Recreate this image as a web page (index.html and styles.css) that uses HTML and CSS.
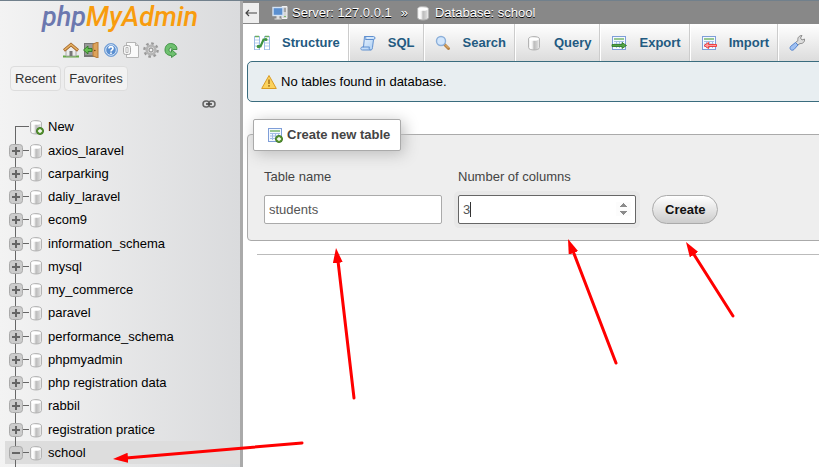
FILE: index.html
```html
<!DOCTYPE html>
<html lang="en">
<head>
<meta charset="utf-8">
<title>phpMyAdmin</title>
<link rel="stylesheet" href="styles.css">
</head>
<body>
<svg class="defs" aria-hidden="true">
  <defs>
    <linearGradient id="metal"><stop offset="0" stop-color="#e4e4e4"/><stop offset=".2" stop-color="#fff"/><stop offset=".35" stop-color="#eee"/><stop offset=".5" stop-color="#bbb"/><stop offset=".8" stop-color="#d4d4d4"/><stop offset="1" stop-color="#f4f4f4"/></linearGradient>
    <linearGradient id="blue" x2="1" y2="1"><stop offset="0" stop-color="#eef6ff"/><stop offset="1" stop-color="#a9cdf3"/></linearGradient>
    <symbol id="db" viewBox="0 0 16 16"><path d="M2.500 4C2.500 .8 13.500 .8 13.500 4V12.500C13.500 15.800 2.500 15.800 2.500 12.500Z" fill="url(#metal)" stroke="#b4b4b4"/><ellipse cx="8" cy="4" rx="4.800" ry="1.800" fill="#fff"/></symbol>
    <symbol id="plus" viewBox="0 0 8 8"><circle cx="4" cy="4" r="3.500" fill="#5d9b35" stroke="#3f7623"/><path d="M4 2v4M2 4h4" stroke="#fff" stroke-width="1.300"/></symbol>
    <symbol id="sheet" viewBox="0 0 16 16"><rect x="1.500" y="1.500" width="13" height="13" fill="#f4f9ff" stroke="#7f9ed8"/><path d="M3 4h10" stroke="#79b66c" stroke-width="1.500"/><path d="M3 6.500h10M3 9h10M3 11.500h10M5.500 6v7M8.500 6v7M11.500 6v7" stroke="#a3bde5"/></symbol>
    <symbol id="expand" viewBox="0 0 14 14"><rect x=".5" y=".5" width="13" height="13" rx="3" fill="#ccc" stroke="#aaa"/><path d="M3 7h8M7 3v8" stroke="#666" stroke-width="2"/></symbol>
    <symbol id="collapse" viewBox="0 0 14 14"><rect x=".5" y=".5" width="13" height="13" rx="3" fill="#ccc" stroke="#aaa"/><path d="M3 7h8" stroke="#666" stroke-width="2"/></symbol>
  </defs>
</svg>

<div class="app">
  <aside class="sidebar">
    <a class="logo" href="#"><span>php</span>MyAdmin</a>
    <nav class="quick" aria-label="Quick links">
      <a href="#" aria-label="Home"><svg viewBox="0 0 16 16"><path d="M0 14.500h16" stroke="#65a947" stroke-width="2"/><path d="M3 8L8 4l5 4v6H3z" fill="#ececec" stroke="#aaa"/><path d="M6.500 9h3v5h-3z" fill="#777"/><path d="M1 8.500L8 2.500l7 6" fill="none" stroke="#a4662a" stroke-width="3"/><path d="M1.500 8L8 2.500 14.500 8" fill="none" stroke="#e6b365" stroke-width="1.600"/></svg></a>
      <a href="#" aria-label="Log out"><svg viewBox="0 0 16 16"><path d="M1 1h14v14H1z" fill="#777"/><path d="M2 2h8v11H2z" fill="#999"/><path d="M10 2l5-2v16l-5-2z" fill="#dda35b" stroke="#b57b39"/><circle cx="11.800" cy="8.500" r=".8" fill="#6d3f12"/><path d="M.5 8L5 4v2.500h4v3H5V12z" fill="#65bf50" stroke="#28761f" stroke-width=".8"/></svg></a>
      <a href="#" aria-label="Documentation"><svg viewBox="0 0 16 16"><circle cx="8" cy="8" r="6.500" fill="#5b8fd0" stroke="#7ca5d8"/><circle cx="8" cy="8" r="5.300" fill="none" stroke="#d9e8fa"/><path d="M6 6.500C6 4 10 4 10 6.500 10 8 8 7.800 8 9.500M8 10.500V12" fill="none" stroke="#fff" stroke-width="1.600"/></svg></a>
      <a href="#" aria-label="MariaDB documentation"><svg viewBox="0 0 16 16"><path d="M3.500.5h9l3 3v12h-12z" fill="#fafafa" stroke="#b5b5b5"/><path d="M12.500.5v3h3" fill="#ddd" stroke="#b5b5b5"/><rect x=".5" y="3.500" width="7" height="9" rx="2" fill="#f4f4f4" stroke="#aaa"/><path d="M3 5.500h2v5H3z" fill="#fff" stroke="#aaa" stroke-width=".8"/></svg></a>
      <a href="#" aria-label="Settings"><svg viewBox="0 0 16 16"><circle cx="8" cy="8" r="6.600" fill="none" stroke="#999" stroke-width="2.400" stroke-dasharray="2.600 2.580"/><circle cx="8" cy="8" r="4.400" fill="#d5d5d5" stroke="#b4b4b4" stroke-width="2.400"/><circle cx="8" cy="8" r="2" fill="#f2f2f2" stroke="#888"/></svg></a>
      <a href="#" aria-label="Reload"><svg viewBox="0 0 16 16"><path d="M7.500 1.500c3.500 0 6.500 2 6.500 6H9.500c0-2-3.500-2.500-3.500.5 0 1.500 1 2 2.500 2V7.500l5 4.500-5 3.500v-2C4.500 13.500 2 11.500 2 8c0-4 2.500-6.500 5.500-6.500z" fill="#6fc070" stroke="#398c3d" stroke-width=".9"/></svg></a>
    </nav>
    <div class="lists"><button type="button">Recent</button><button type="button">Favorites</button></div>
    <a class="link-toggle" href="#" aria-label="Unlink from main panel"><svg viewBox="0 0 14 8"><rect x="1" y="1" width="6.500" height="6" rx="3" fill="none" stroke="#666" stroke-width="1.500"/><rect x="6.500" y="1" width="6.500" height="6" rx="3" fill="none" stroke="#666" stroke-width="1.500"/><path d="M4 4h6" stroke="#444" stroke-width="1.500"/></svg></a>
    <ul class="tree">
      <li class="new"><i></i><svg class="db"><use href="#db"/></svg><svg class="badge"><use href="#plus"/></svg><a href="#">New</a></li>
      <li><button type="button" aria-label="Expand"><svg><use href="#expand"/></svg></button><i></i><svg class="db"><use href="#db"/></svg><a href="#">axios_laravel</a></li>
      <li><button type="button" aria-label="Expand"><svg><use href="#expand"/></svg></button><i></i><svg class="db"><use href="#db"/></svg><a href="#">carparking</a></li>
      <li><button type="button" aria-label="Expand"><svg><use href="#expand"/></svg></button><i></i><svg class="db"><use href="#db"/></svg><a href="#">daliy_laravel</a></li>
      <li><button type="button" aria-label="Expand"><svg><use href="#expand"/></svg></button><i></i><svg class="db"><use href="#db"/></svg><a href="#">ecom9</a></li>
      <li><button type="button" aria-label="Expand"><svg><use href="#expand"/></svg></button><i></i><svg class="db"><use href="#db"/></svg><a href="#">information_schema</a></li>
      <li><button type="button" aria-label="Expand"><svg><use href="#expand"/></svg></button><i></i><svg class="db"><use href="#db"/></svg><a href="#">mysql</a></li>
      <li><button type="button" aria-label="Expand"><svg><use href="#expand"/></svg></button><i></i><svg class="db"><use href="#db"/></svg><a href="#">my_commerce</a></li>
      <li><button type="button" aria-label="Expand"><svg><use href="#expand"/></svg></button><i></i><svg class="db"><use href="#db"/></svg><a href="#">paravel</a></li>
      <li><button type="button" aria-label="Expand"><svg><use href="#expand"/></svg></button><i></i><svg class="db"><use href="#db"/></svg><a href="#">performance_schema</a></li>
      <li><button type="button" aria-label="Expand"><svg><use href="#expand"/></svg></button><i></i><svg class="db"><use href="#db"/></svg><a href="#">phpmyadmin</a></li>
      <li><button type="button" aria-label="Expand"><svg><use href="#expand"/></svg></button><i></i><svg class="db"><use href="#db"/></svg><a href="#">php registration data</a></li>
      <li><button type="button" aria-label="Expand"><svg><use href="#expand"/></svg></button><i></i><svg class="db"><use href="#db"/></svg><a href="#">rabbil</a></li>
      <li><button type="button" aria-label="Expand"><svg><use href="#expand"/></svg></button><i></i><svg class="db"><use href="#db"/></svg><a href="#">registration pratice</a></li>
      <li class="selected"><button type="button" aria-label="Collapse"><svg><use href="#collapse"/></svg></button><i></i><svg class="db"><use href="#db"/></svg><a href="#">school</a></li>
    </ul>
  </aside>

  <main class="content">
    <header class="crumbs">
      <button class="back" type="button" aria-label="Hide panel"><svg viewBox="0 0 14 10"><path d="M13 5H2M5 2L2 5l3 3" fill="none" stroke="#444" stroke-width="1.200"/></svg></button>
      <svg class="icon" viewBox="0 0 16 16"><path d="M10 1.500h5v12h-5z" fill="#d5d5d5" stroke="#f2f2f2"/><path d="M11 4h3M11 6h3" stroke="#777"/><rect x="1" y="2.500" width="10" height="8" fill="#5a8fd0" stroke="#d4e3f5" stroke-width="1.400"/><path d="M4.500 11h3v2.500h2v1h-7v-1h2z" fill="#ddd"/><path d="M13 11v1" stroke="#5cb345" stroke-width="1.500"/></svg>
      <a href="#">Server: 127.0.0.1</a><span class="sep">»</span>
      <svg class="icon"><use href="#db"/></svg>
      <a href="#">Database: school</a>
    </header>
    <nav class="tabs">
      <a class="active" href="#"><svg viewBox="0 0 16 16"><path d="M.5 1v14M5.500 1v14M10.500 1v14M15.500 1v14" stroke="#9bbbe6"/><path d="M1 1.500h4M11 1.500h4" stroke="#69ad5e" stroke-width="1.500"/><path d="M1 5h4M1 8h4M1 11h4M1 14.500h4M11 5h4M11 8h4M11 11h4M11 14.500h4" stroke="#b3cdec"/><path d="M4 11.500h2.500l3-7H12" fill="none" stroke="#3e9340" stroke-width="2.200"/><circle cx="4.500" cy="11.500" r="1.800" fill="#3e9340"/><circle cx="12" cy="4.500" r="1.500" fill="#3e9340"/></svg>Structure</a>
      <a href="#"><svg viewBox="0 0 16 16"><path d="M4.500 1.500h9c2 0 2 3 0 3l-1 8c0 2-1 2.500-2 2.500H2.500c-2.500 0-2-3 0-3h1z" fill="url(#blue)" stroke="#5f8fcf"/><path d="M4.500 1.500c1.500 0 1.500 2 1 3h8M2.500 12h7c-1 1 0 3 1 3" fill="none" stroke="#5f8fcf"/></svg>SQL</a>
      <a href="#"><svg viewBox="0 0 16 16"><path d="M9.500 9.500l4 4" stroke="#b98346" stroke-width="3" stroke-linecap="round"/><path d="M10 9.500l3.500 3.500" stroke="#e7bb78"/><circle cx="6" cy="6" r="4.500" fill="#d2e6fc" stroke="#8cafd9" stroke-width="1.400"/></svg>Search</a>
      <a href="#"><svg><use href="#db"/></svg>Query</a>
      <a href="#"><svg viewBox="0 0 16 16"><use href="#sheet"/><path d="M1 9.500h10V7.500l4.500 3L11 13.500v-2H1z" fill="#54a545" stroke="#28731f" stroke-width=".8"/></svg>Export</a>
      <a href="#"><svg viewBox="0 0 16 16"><use href="#sheet"/><path d="M15.500 9.500H7.500v-2L3 10.500l4.500 3v-2h8z" fill="#ff9c9c" stroke="#e33" stroke-width=".9"/></svg>Import</a>
      <a class="last" href="#" aria-label="Settings"><svg viewBox="0 0 16 16"><path d="M9 5.500c-.8-2.500 1-5 4-5L11.500 3l1.500 2 2.500-1c.5 3-2 5-4.500 4.500L9 10 6.500 7.500z" fill="#ddd" stroke="#8c8c8c"/><path d="M6.500 7.500l2.500 2.500-4 4.500c-2.500 2-5-.5-3.500-3z" fill="#9fc0f2" stroke="#5684cc"/></svg></a>
    </nav>
    <div class="notice" role="status"><svg viewBox="0 0 16 16"><path d="M8 1.500L15.300 14.500H.7z" fill="#fbd25d" stroke="#d99b24" stroke-linejoin="round"/><path d="M8 5.500v4.500M8 11v1.700" stroke="#a06c18" stroke-width="1.400"/></svg>No tables found in database.</div>
    <form class="panel">
      <h2><svg viewBox="0 0 16 16"><use href="#sheet"/><use href="#plus" x="8" y="8" width="8" height="8"/></svg>Create new table</h2>
      <div class="fields">
        <div class="field"><label for="name">Table name</label><input id="name" type="text" value="students"></div>
        <div class="field"><label for="cols">Number of columns</label><input id="cols" type="number" min="1" value="3" autofocus></div>
        <button class="create" type="button">Create</button>
      </div>
    </form>
    <hr>
  </main>
</div>

<svg class="arrows" viewBox="0 0 819 467" aria-hidden="true">
  <defs><marker id="head" viewBox="0 0 15 10" refX="15" refY="5" markerWidth="15" markerHeight="10" markerUnits="userSpaceOnUse" orient="auto"><path d="M0 0L15 5 0 10z" fill="#f00"/></marker></defs>
  <g stroke="#f00" stroke-width="3" stroke-linecap="round">
    <path d="M354 398L338 261"/><path d="M616 363L573 251"/><path d="M733 316L693 253"/><path d="M302 443L126 458"/>
  </g>
  <g stroke="none" fill="none">
    <path d="M354 398L336 248" marker-end="url(#head)"/><path d="M616 363L568 239" marker-end="url(#head)"/><path d="M733 316L686 242" marker-end="url(#head)"/><path d="M302 443L113 459" marker-end="url(#head)"/>
  </g>
</svg>
</body>
</html>
```
FILE: styles.css
```css
* { box-sizing: border-box; }

body {
  margin: 0;
  height: 100vh;
  overflow: hidden;
  background: #fff;
  color: #444;
  font: 13px/16px "Liberation Sans", Arial, sans-serif;
}

a { color: inherit; text-decoration: none; }
button, input { font: inherit; }
svg { display: block; flex: none; }
.defs { position: absolute; width: 0; height: 0; }

.app {
  display: grid;
  grid-template-columns: 243px minmax(0, 1fr);
  height: 100vh;
  border-top: 1px solid #71808c;
}

/* Navigation panel */
.sidebar {
  display: flex;
  flex-direction: column;
  overflow: hidden;
  background: linear-gradient(to right, #f3f3f3, #dadbdd);
  border-right: 3px solid #aaa;
}

.logo {
  align-self: center;
  color: #f89c0e;
  font: italic 500 27px/32px Roboto, sans-serif;
}
.logo span { color: #6c78af; }

.quick {
  display: flex;
  justify-content: center;
  gap: 4px;
  margin-top: 9px;
  padding-left: 2px;
}
.quick svg { width: 16px; height: 16px; }

.lists { display: flex; gap: 3px; margin: 8px 10px 0; }
.lists button {
  height: 25px;
  padding: 0 4px;
  background: #f2f2f2;
  border: 1px solid #ddd;
  border-radius: 4px;
  color: #333;
}

.link-toggle { align-self: flex-end; margin: 9px 24px 0 0; }
.link-toggle svg { width: 14px; height: 8px; }

.tree {
  list-style: none;
  margin: 7px 0 0;
  padding: 0 0 0 5px;
  flex: 1;
  background: linear-gradient(#666, #666) 15px 11px / 1px 100% no-repeat;
}
.tree li {
  display: flex;
  align-items: center;
  height: 23px;
  padding-left: 4px;
  color: #000;
}
.tree li:nth-child(4n + 2) { margin-top: 1px; }
.tree button { padding: 0; border: 0; background: none; }
.tree button svg { width: 14px; height: 14px; }
.tree i { width: 6px; height: 1px; background: #666; }
.tree .db { width: 16px; height: 16px; margin-left: -1px; }
.tree a { margin-left: 4px; }
.tree .new { position: relative; }
.tree .new i { width: 14px; margin-left: 6px; }
.tree .badge { position: absolute; left: 31px; top: 12px; width: 8px; height: 8px; }
.tree .selected {
  background: linear-gradient(#666, #666) 10px 0 / 1px 100% no-repeat #ddd;
}

/* Main panel */
.content { overflow: hidden; }

.crumbs {
  display: flex;
  align-items: center;
  height: 23px;
  background: #888;
  color: #fff;
  text-shadow: 0 1px 0 #000;
  white-space: nowrap;
}
.crumbs .icon { width: 16px; height: 16px; margin-right: 4px; }
.back {
  width: 16px;
  height: 20px;
  margin-right: 13px;
  padding: 0 1px;
  background: #eee;
  border: 0;
}
.back svg { width: 14px; height: 10px; }
.sep { margin: 0 7px 0 9px; }

.tabs { display: flex; height: 37px; }
.tabs a {
  display: flex;
  align-items: center;
  flex: none;
  gap: 12px;
  padding: 0 8px 0 11px;
  background: linear-gradient(#fff, #dcdcdc);
  border-left: 1px solid #ccc;
  box-shadow: inset 1px 0 0 #fff;
  color: #235a81;
  font-weight: bold;
}
.tabs a.active { background: #fff; border-left: 0; }
.tabs a.last { flex: 1; }
.tabs svg { width: 16px; height: 16px; }

.notice {
  display: flex;
  align-items: center;
  gap: 4px;
  height: 41px;
  margin: 0 -5px 0 4px;
  padding-left: 13px;
  background: #e8eef1;
  border: 1px solid #3a6c7e;
  border-radius: 5px;
  color: #000;
}
.notice svg { width: 16px; height: 16px; }

.panel {
  margin: 32px -5px 0 4px;
  height: 107px;
  padding: 0 16px;
  background: #eee;
  border: 1px solid #aaa;
  border-radius: 4px;
}
.panel h2 {
  display: flex;
  align-items: center;
  gap: 4px;
  width: max-content;
  height: 32px;
  margin: -16px 0 0 -11px;
  padding: 0 10px 0 13px;
  background: #fff;
  border: 1px solid #aaa;
  border-radius: 2px;
  box-shadow: 3px 3px 15px #bbb;
  font-size: 13px;
}
.panel h2 svg { width: 16px; height: 16px; }

.fields { display: flex; align-items: flex-end; gap: 16px; margin-top: 18px; }
.field { display: flex; flex-direction: column; gap: 10px; }
.field input {
  width: 178px;
  height: 29px;
  padding: 4px;
  background: #fff;
  border: 1px solid #aaa;
  border-radius: 2px;
  color: #555;
  outline: none;
}
.field input:focus {
  background: linear-gradient(#333, #333) 11px 50% / 1px 15px no-repeat #fff;
  border-color: #666;
  box-shadow: 0 0 0 4px #e8e8e8;
  caret-color: transparent;
}
.field input::-webkit-inner-spin-button { opacity: 1; }

.create {
  height: 29px;
  padding: 0 12px;
  background: linear-gradient(#fff, #ccc);
  border: 1px solid #aaa;
  border-radius: 15px;
  color: #111;
  font-weight: bold;
}

hr {
  margin: 13px 0 0 14px;
  border: 0;
  border-top: 1px solid #bbb;
}

/* Annotation arrows lying over the page */
.arrows {
  position: absolute;
  top: 0;
  left: 0;
  width: 100%;
  pointer-events: none;
}
```
